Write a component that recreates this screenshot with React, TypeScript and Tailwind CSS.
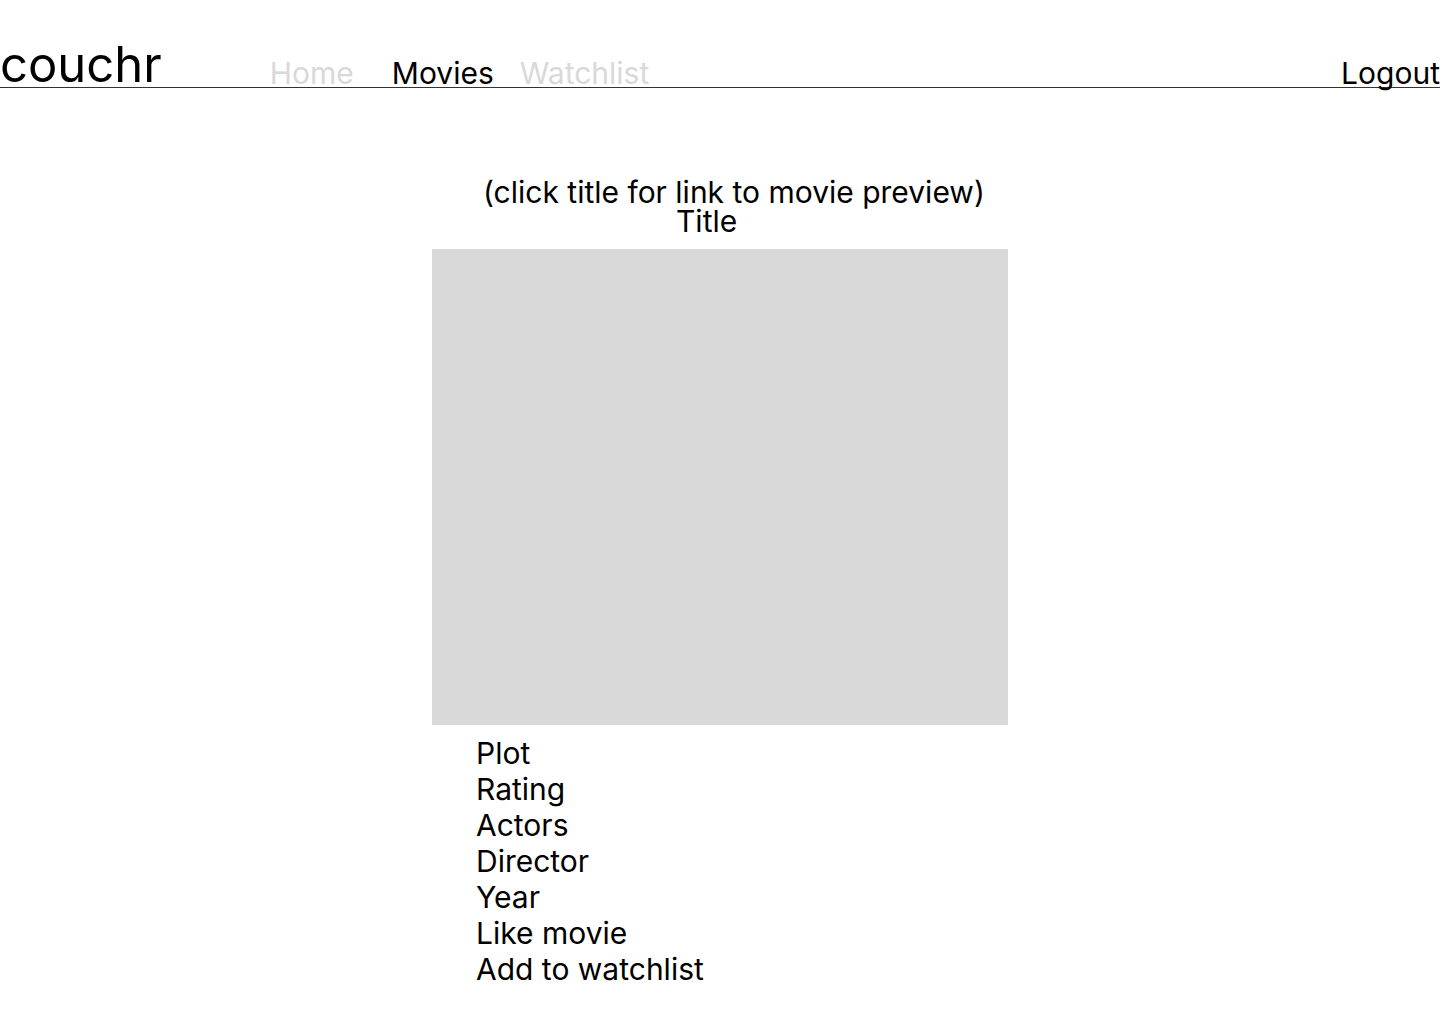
import React from "react";

export default function App() {
  const items = ["Plot", "Rating", "Actors", "Director", "Year", "Like movie", "Add to watchlist"];
  return (
    <div className="w-[1440px] h-[1024px] bg-white text-black font-['Inter',sans-serif] overflow-hidden">
      <header className="h-[88px] flex items-end border-b border-[#333333]">
        <div className="text-[49px] leading-none translate-y-[2px]">couchr</div>
        <nav className="flex items-end ml-[108px] text-[30px] leading-none translate-y-[1px]">
          <span className="text-[#d9d9d9]">Home</span>
          <span className="ml-[38px]">Movies</span>
          <span className="ml-[26px] text-[#d9d9d9]">Watchlist</span>
        </nav>
        <div className="ml-auto text-[30px] leading-none translate-y-[1px]">Logout</div>
      </header>
      <main className="pl-[432px] pt-[88px]">
        <div className="text-[30px] leading-[30px] ml-[51px] translate-y-[1px]">(click title for link to movie preview)</div>
        <div className="text-[30px] leading-[30px] ml-[244px]">Title</div>
        <div className="mt-[13px] w-[576px] h-[476px] bg-[#d9d9d9]" />
        <ul className="mt-[10px] ml-[44px] text-[30px] leading-[36px]">
          {items.map((t) => (
            <li key={t}>{t}</li>
          ))}
        </ul>
      </main>
    </div>
  );
}
